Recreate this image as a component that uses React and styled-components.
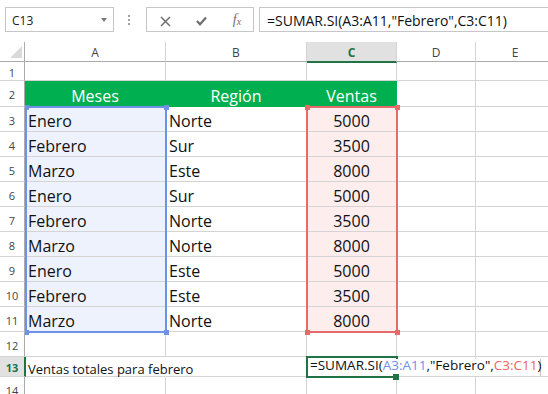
import React from 'react';
import styled, { createGlobalStyle } from 'styled-components';

const GRID = '#d4d4d4';
const HDR_LINE = '#ababab';
const XL_GREEN = '#217346';
const HEAD_GREEN = '#00b050';
const BLUE = '#6d92e6';
const BLUE_FILL = '#eef2fd';
const RED = '#e66a6a';
const RED_FILL = '#fdeded';

const GlobalStyle = createGlobalStyle`
  html, body { margin: 0; padding: 0; background: #fff; }
  body {
    width: 548px; height: 394px; overflow: hidden;
    font-family: "Open Sans", "Noto Sans", sans-serif;
    color: #111;
  }
  * { box-sizing: border-box; }
`;

const Window = styled.div`
  width: 548px;
  height: 394px;
  overflow: hidden;
  display: flex;
  flex-direction: column;
  background: #fff;
`;

const FormulaBar = styled.div`
  flex: none;
  height: 42px;
  display: flex;
  align-items: flex-start;
  padding: 7px 0 0 5px;
`;

const NameBox = styled.div`
  width: 109px;
  height: 25px;
  border: 1px solid #c6c6c6;
  display: flex;
  align-items: center;
  justify-content: space-between;
  padding: 1px 6px 0 6px;
  font-size: 12px;
  color: #222;
`;

const Caret = styled.span`
  width: 0;
  height: 0;
  border-left: 3.5px solid transparent;
  border-right: 3.5px solid transparent;
  border-top: 4px solid #7a7a7a;
  margin-top: -1px;
`;

const Dots = styled.div`
  margin: 8px 16px 0 14px;
  display: flex;
  flex-direction: column;
  gap: 2px;
`;

const Dot = styled.span`
  width: 2px;
  height: 2px;
  background: #a3a3a3;
`;

const FxBox = styled.div`
  width: 108px;
  height: 25px;
  border: 1px solid #c6c6c6;
  display: grid;
  grid-template-columns: repeat(3, 36px);
  justify-items: center;
  align-items: center;
  padding-top: 3px;
`;

const FxText = styled.span`
  font-family: "Liberation Serif", "DejaVu Serif", serif;
  font-style: italic;
  color: #707070;
  font-size: 14px;
  line-height: 14px;
  & > sub {
    font-size: 10px;
    vertical-align: -1px;
  }
`;

const FormulaInput = styled.div`
  flex: 1;
  height: 25px;
  margin-left: 5px;
  margin-right: -20px;
  border: 1px solid #c6c6c6;
  padding: 1px 0 0 7px;
  font-size: 14px;
  line-height: 23px;
  color: #111;
  white-space: nowrap;
`;

const Sheet = styled.div`
  flex: 1;
  overflow: hidden;
`;

const Grid = styled.div`
  display: grid;
  grid-template-columns: 25px 141px 141px 90px 79px 79px;
  grid-template-rows: 20px 19px 26px repeat(10, 25px) 20px 25px;
  width: 555px;
`;

const Corner = styled.div`
  grid-row: 1;
  grid-column: 1;
  border-right: 1px solid ${HDR_LINE};
  border-bottom: 1px solid ${HDR_LINE};
  display: flex;
  align-items: flex-end;
  justify-content: flex-end;
  padding: 0 2px 3px 0;
  background: #fff;
  z-index: 3;
`;

const CornerTriangle = styled.span`
  width: 0;
  height: 0;
  border-left: 12px solid transparent;
  border-bottom: 12px solid #dadada;
`;

const ColHead = styled.div`
  grid-row: 1;
  grid-column: ${p => p.$c};
  display: flex;
  align-items: center;
  justify-content: center;
  font-size: 12px;
  padding-top: 1px;
  color: ${p => (p.$sel ? XL_GREEN : '#444')};
  font-weight: ${p => (p.$sel ? 700 : 400)};
  background: ${p => (p.$sel ? '#e1e1e1' : '#fff')};
  border-right: 1px solid ${GRID};
  border-bottom: ${p => (p.$sel ? `2px solid ${XL_GREEN}` : `1px solid ${HDR_LINE}`)};
  margin-bottom: ${p => (p.$sel ? '-1px' : '0')};
  z-index: ${p => (p.$sel ? 3 : 1)};
`;

const RowHead = styled.div`
  grid-row: ${p => p.$r};
  grid-column: 1;
  display: flex;
  align-items: center;
  justify-content: center;
  padding-top: 2px;
  font-size: 11px;
  color: ${p => (p.$sel ? XL_GREEN : '#444')};
  font-weight: ${p => (p.$sel ? 700 : 400)};
  background: ${p => (p.$sel ? '#e1e1e1' : '#fff')};
  border-bottom: 1px solid ${GRID};
  border-right: ${p => (p.$sel ? `2px solid ${XL_GREEN}` : `1px solid ${HDR_LINE}`)};
  margin-right: ${p => (p.$sel ? '-1px' : '0')};
  z-index: 3;
`;

const Cell = styled.div`
  grid-row: ${p => p.$r};
  grid-column: ${p => p.$c};
  display: flex;
  align-items: flex-end;
  justify-content: ${p => (p.$center ? 'center' : 'flex-start')};
  padding: 0 3px;
  white-space: nowrap;
  font-size: ${p => (p.$small ? '13px' : '16px')};
  line-height: ${p => (p.$small ? '14px' : '20px')};
  color: ${p => (p.$head ? '#fff' : '#111')};
  background: ${p => (p.$head ? HEAD_GREEN : p.$fill || 'transparent')};
  border-bottom: 1px solid ${p => (p.$head ? HEAD_GREEN : GRID)};
  border-right: 1px solid ${p => (p.$head ? HEAD_GREEN : p.$noRight ? 'transparent' : GRID)};
`;

const Frame = styled.div`
  grid-row: ${p => p.$r};
  grid-column: ${p => p.$c};
  position: relative;
  z-index: ${p => p.$z || 2};
  pointer-events: none;
  border: 2px solid ${p => p.$color};
  margin: -1px -1px -1px ${p => (p.$ml !== undefined ? p.$ml : -1)}px;
`;

const Handle = styled.span`
  position: absolute;
  width: 5px;
  height: 5px;
  background: ${p => p.$color};
  ${p => (p.$top ? 'top: -3.5px;' : 'bottom: -3.5px;')}
  ${p => (p.$left ? 'left: -3.5px;' : 'right: -3.5px;')}
`;

const FillHandle = styled.span`
  grid-row: 14;
  grid-column: 4;
  align-self: end;
  justify-self: end;
  width: 6px;
  height: 6px;
  margin: 0 -2px -3px 0;
  background: ${XL_GREEN};
  z-index: 6;
`;

const Editor = styled.div`
  grid-row: 14;
  grid-column: 4 / 7;
  justify-self: start;
  width: 233px;
  margin: 2px 0 1px 1px;
  background: #fff;
  border-right: 1px solid #c6c6c6;
  padding-left: 2px;
  font-size: 13.5px;
  line-height: 12px;
  white-space: nowrap;
  color: #111;
  z-index: 5;
`;

const Ref = styled.span`
  color: ${p => p.$color};
`;

const A = ['', 'Meses', 'Enero', 'Febrero', 'Marzo', 'Enero', 'Febrero', 'Marzo', 'Enero', 'Febrero', 'Marzo', '', 'Ventas totales para febrero', ''];
const B = ['', 'Región', 'Norte', 'Sur', 'Este', 'Sur', 'Norte', 'Norte', 'Este', 'Este', 'Norte', '', '', ''];
const C = ['', 'Ventas', '5000', '3500', '8000', '5000', '3500', '8000', '5000', '3500', '8000', '', '', ''];
const COLS = ['A', 'B', 'C', 'D', 'E'];

const CrossIcon = () => (
  <svg width="11" height="11" viewBox="0 0 11 11">
    <path d="M1 1 L10 10 M10 1 L1 10" stroke="#707070" strokeWidth="1.5" fill="none" />
  </svg>
);

const CheckIcon = () => (
  <svg width="11" height="10" viewBox="0 0 11 10">
    <polyline points="1,5 4,8.3 10,1.5" stroke="#707070" strokeWidth="2.2" fill="none" />
  </svg>
);

export default function App() {
  const rows = [];
  for (let i = 0; i < 14; i++) {
    const n = i + 1;
    const r = n + 1;
    const isHead = n === 2;
    const inRange = n >= 3 && n <= 11;
    const small = n === 13;
    rows.push(
      <RowHead key={`h${n}`} $r={r} $sel={n === 13}>{n}</RowHead>,
      <Cell key={`a${n}`} $r={r} $c={2} $head={isHead} $center={isHead} $small={small}
        $fill={inRange ? BLUE_FILL : undefined} $noRight={n === 13}>{A[i]}</Cell>,
      <Cell key={`b${n}`} $r={r} $c={3} $head={isHead} $center={isHead} $small={small}>{B[i]}</Cell>,
      <Cell key={`c${n}`} $r={r} $c={4} $head={isHead} $center $small={small}
        $fill={inRange ? RED_FILL : undefined}>{C[i]}</Cell>,
      <Cell key={`d${n}`} $r={r} $c={5} />,
      <Cell key={`e${n}`} $r={r} $c={6} />
    );
  }

  return (
    <>
      <GlobalStyle />
      <Window>
        <FormulaBar>
          <NameBox>
            <span>C13</span>
            <Caret />
          </NameBox>
          <Dots>
            <Dot />
            <Dot />
            <Dot />
          </Dots>
          <FxBox>
            <CrossIcon />
            <CheckIcon />
            <FxText>f<sub>x</sub></FxText>
          </FxBox>
          <FormulaInput>=SUMAR.SI(A3:A11,"Febrero",C3:C11)</FormulaInput>
        </FormulaBar>
        <Sheet>
          <Grid>
            <Corner><CornerTriangle /></Corner>
            {COLS.map((c, i) => (
              <ColHead key={c} $c={i + 2} $sel={c === 'C'}>{c}</ColHead>
            ))}
            {rows}
            <Frame $r="4 / 13" $c={2} $color={BLUE} $ml={0}>
              <Handle $color={BLUE} $top $left />
              <Handle $color={BLUE} $top />
              <Handle $color={BLUE} $left />
              <Handle $color={BLUE} />
            </Frame>
            <Frame $r="4 / 13" $c={4} $color={RED}>
              <Handle $color={RED} $top $left />
              <Handle $color={RED} $top />
              <Handle $color={RED} $left />
              <Handle $color={RED} />
            </Frame>
            <Frame $r={14} $c={4} $color={XL_GREEN} $z={4} />
            <Editor>
              =SUMAR.SI(<Ref $color="#6e90ea">A3:A11</Ref>,"Febrero",<Ref $color="#ec6464">C3:C11</Ref>)
            </Editor>
            <FillHandle />
          </Grid>
        </Sheet>
      </Window>
    </>
  );
}
